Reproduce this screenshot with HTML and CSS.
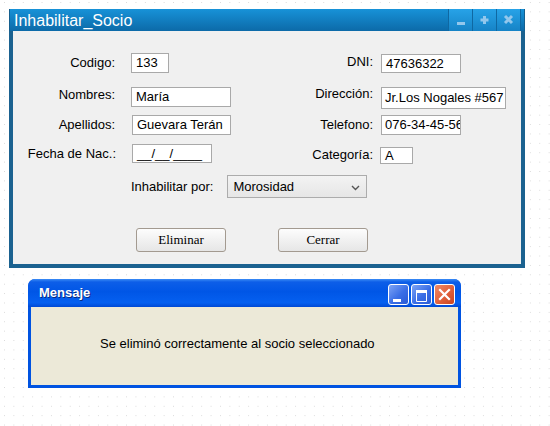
FILE: index.html
```html
<!DOCTYPE html>
<html lang="es">
<head>
<meta charset="utf-8">
<title>Inhabilitar_Socio</title>
<link rel="stylesheet" href="styles.css">
</head>
<body>
<div class="page">
  <div class="win">
    <div class="win-title">
      <span class="win-title-text">Inhabilitar_Socio</span>
      <div class="win-btns">
        <span class="wb"><svg width="23" height="22" viewBox="0 0 23 22"><rect x="8" y="13" width="8" height="3" fill="#93c7ec"/></svg></span>
        <span class="wb"><svg width="23" height="22" viewBox="0 0 23 22"><rect x="7.5" y="9.5" width="8" height="3" fill="#93c7ec"/><rect x="10" y="7" width="3" height="8" fill="#93c7ec"/></svg></span>
        <span class="wb last"><svg width="23" height="22" viewBox="0 0 23 22"><path d="M8 7 L15 14 M15 7 L8 14" stroke="#93c7ec" stroke-width="3"/></svg></span>
      </div>
    </div>
    <div class="win-body">
      <div class="form">
        <div class="lbl">Codigo:</div>
        <div class="cell"><div class="fld f-cod">133</div></div>
        <div class="lbl rl l-dni">DNI:</div>
        <div class="cell"><div class="fld f-dni">47636322</div></div>

        <div class="lbl l-nom">Nombres:</div>
        <div class="cell"><div class="fld f-nom">María</div></div>
        <div class="lbl rl l-dir">Dirección:</div>
        <div class="cell"><div class="fld f-dir">Jr.Los Nogales #567</div></div>

        <div class="lbl">Apellidos:</div>
        <div class="cell"><div class="fld f-ape">Guevara Terán</div></div>
        <div class="lbl rl">Telefono:</div>
        <div class="cell"><div class="fld f-tel">076-34-45-56</div></div>

        <div class="lbl l-fec">Fecha de Nac.:</div>
        <div class="cell"><div class="fld f-fec">__/__/____</div></div>
        <div class="lbl rl l-cat">Categoría:</div>
        <div class="cell"><div class="fld f-cat">A</div></div>

        <div class="row-select">
          <span class="sel-lbl">Inhabilitar por:</span>
          <div class="select">
            <span>Morosidad</span>
            <svg width="9" height="6" viewBox="0 0 9 6"><path d="M1 1 L4.5 4.5 L8 1" fill="none" stroke="#555" stroke-width="1.4"/></svg>
          </div>
        </div>

        <div class="row-buttons">
          <div class="btn">Eliminar</div>
          <div class="btn">Cerrar</div>
        </div>
      </div>
    </div>
  </div>

  <div class="msg">
    <div class="msg-title">
      <span class="msg-title-text">Mensaje</span>
      <div class="xp-btns">
        <span class="xb xb-blue"><svg width="19" height="19" viewBox="0 0 19 19"><rect x="4" y="14" width="8" height="3" fill="#fff"/></svg></span>
        <span class="xb xb-blue"><svg width="19" height="19" viewBox="0 0 19 19"><path d="M4.5 6 H14.5 V16.5 H4.5 Z" fill="none" stroke="#fff" stroke-width="1"/><rect x="4" y="5" width="11" height="3" fill="#fff"/></svg></span>
        <span class="xb xb-red"><svg width="19" height="19" viewBox="0 0 19 19"><path d="M5 5 L14 14 M14 5 L5 14" stroke="#fff" stroke-width="2.2" stroke-linecap="square"/></svg></span>
      </div>
    </div>
    <div class="msg-body">
      <p class="msg-text">Se eliminó correctamente al socio seleccionado</p>
    </div>
  </div>
</div>
</body>
</html>
```

FILE: styles.css
```css
html, body {
  margin: 0;
  padding: 0;
}

body {
  width: 550px;
  height: 426px;
  background-color: #ffffff;
  background-image: conic-gradient(at 1px 1px, transparent 75%, #d9d9d9 0);
  background-size: 9.4px 9.4px;
  background-position: 4px 2px;
  font-family: "Liberation Sans", Arial, sans-serif;
  font-size: 13px;
  color: #000;
  overflow: hidden;
}

.page {
  padding: 9px 0 0 9px;
}

/* ---------- main window ---------- */
.win {
  width: 516px;
  height: 259px;
  display: flex;
  flex-direction: column;
}

.win-title {
  flex: none;
  height: 22px;
  display: flex;
  justify-content: space-between;
  background: linear-gradient(#1792d8, #0c6aa8);
  box-shadow: inset 1px 0 0 #155f8e, inset -1px 0 0 #155f8e;
}

.win-title-text {
  color: #ffffff;
  font-size: 16px;
  line-height: 22px;
  padding: 1px 0 0 5px;
}

.win-btns {
  display: flex;
  margin-right: 4px;
}

.wb {
  width: 23px;
  height: 22px;
  border-left: 1px solid #0f68a2;
  background: linear-gradient(#27a3e8, #1683c6);
}

.wb.last {
  border-right: 1px solid #0f68a2;
}

.wb svg {
  display: block;
}

.win-body {
  flex: 1;
  border: 4px solid #1b6290;
  border-top: 0;
  background: #f0f0f0;
}

/* ---------- form grid ---------- */
.form {
  display: grid;
  grid-template-columns: 118px 130px 112px 1fr;
  grid-template-rows: 34px 28px 29px 20px auto auto;
  align-items: start;
  padding-top: 22px;
}

.lbl {
  text-align: right;
  padding-right: 16px;
  line-height: 20px;
  white-space: nowrap;
}

.lbl.rl {
  padding-right: 0;
}

.l-dni { margin-top: -1px; }
.l-nom { margin-top: -2px; }
.l-dir { margin-top: -3px; }
.l-fec { padding-right: 15px; }
.l-cat { margin-top: 1px; }

.fld {
  box-sizing: border-box;
  height: 20px;
  line-height: 18px;
  border: 1px solid #a9a9a9;
  background: #ffffff;
  padding: 0 4px;
  white-space: nowrap;
  overflow: hidden;
}

.f-cod { width: 38px; }
.f-nom { width: 100px; }
.f-ape { width: 99px; margin-left: 1px; }
.f-fec { width: 80px; margin-left: 1px; height: 19px; line-height: 17px; }

.f-dni { width: 80px; margin-left: 8px; margin-top: 1px; height: 19px; line-height: 17px; }
.f-dir { width: 125px; margin-left: 8px; height: 22px; line-height: 20px; padding-left: 3px; }
.f-tel { width: 80px; margin-left: 8px; padding-left: 3px; }
.f-cat { width: 33px; margin-left: 7px; margin-top: 3px; height: 17px; line-height: 15px; }

/* select row */
.row-select {
  grid-column: 2 / 5;
  display: flex;
  align-items: center;
  gap: 14px;
  margin-top: 11px;
}

.sel-lbl {
  line-height: 20px;
}

.select {
  box-sizing: border-box;
  width: 140px;
  height: 23px;
  border: 1px solid #acacac;
  background: linear-gradient(#f3f3f3, #e6e6e6);
  display: flex;
  align-items: center;
  justify-content: space-between;
  padding: 0 6px 0 5px;
}

.select svg {
  display: block;
  margin-top: 3px;
}

/* buttons row */
.row-buttons {
  grid-column: 2 / 5;
  display: flex;
  gap: 52px;
  margin-top: 30px;
  padding-left: 5px;
}

.btn {
  box-sizing: border-box;
  width: 90px;
  height: 24px;
  border: 1px solid #a39a90;
  border-radius: 3px;
  background: linear-gradient(#fdfdfd, #f1f1f1 50%, #e6e6e6);
  font-family: "Liberation Serif", "Times New Roman", serif;
  font-size: 13px;
  line-height: 22px;
  text-align: center;
}

/* ---------- XP message box ---------- */
.msg {
  margin: 11px 0 0 19px;
  width: 433px;
  height: 109px;
  display: flex;
  flex-direction: column;
  border-radius: 7px 7px 0 0;
  background: #0053e1;
  overflow: hidden;
}

.msg-title {
  flex: none;
  height: 28px;
  display: flex;
  justify-content: space-between;
  background: linear-gradient(#3b8cf5 0, #0d5ee8 3px, #0056e6 45%, #0560f0 85%, #0049d4 100%);
}

.msg-title-text {
  color: #ffffff;
  font-weight: bold;
  font-size: 13px;
  line-height: 28px;
  padding-left: 11px;
  text-shadow: 1px 1px 0 #0a2a80;
}

.xp-btns {
  display: flex;
  gap: 2px;
  padding: 5px 6px 0 0;
}

.xb {
  box-sizing: border-box;
  width: 21px;
  height: 21px;
  border: 1px solid #ffffff;
  border-radius: 3px;
}

.xb svg {
  display: block;
}

.xb-blue {
  background: linear-gradient(135deg, #7da4f5, #3a6ee6 55%, #2a5bd6);
}

.xb-red {
  background: linear-gradient(135deg, #f08a68, #e0603b 55%, #c9431f);
}

.msg-body {
  flex: 1;
  margin: 0 3px 3px;
  background: #ece9d8;
}

.msg-text {
  margin: 0;
  padding: 28px 0 0 69px;
  line-height: 18px;
  font-size: 13px;
}
```
